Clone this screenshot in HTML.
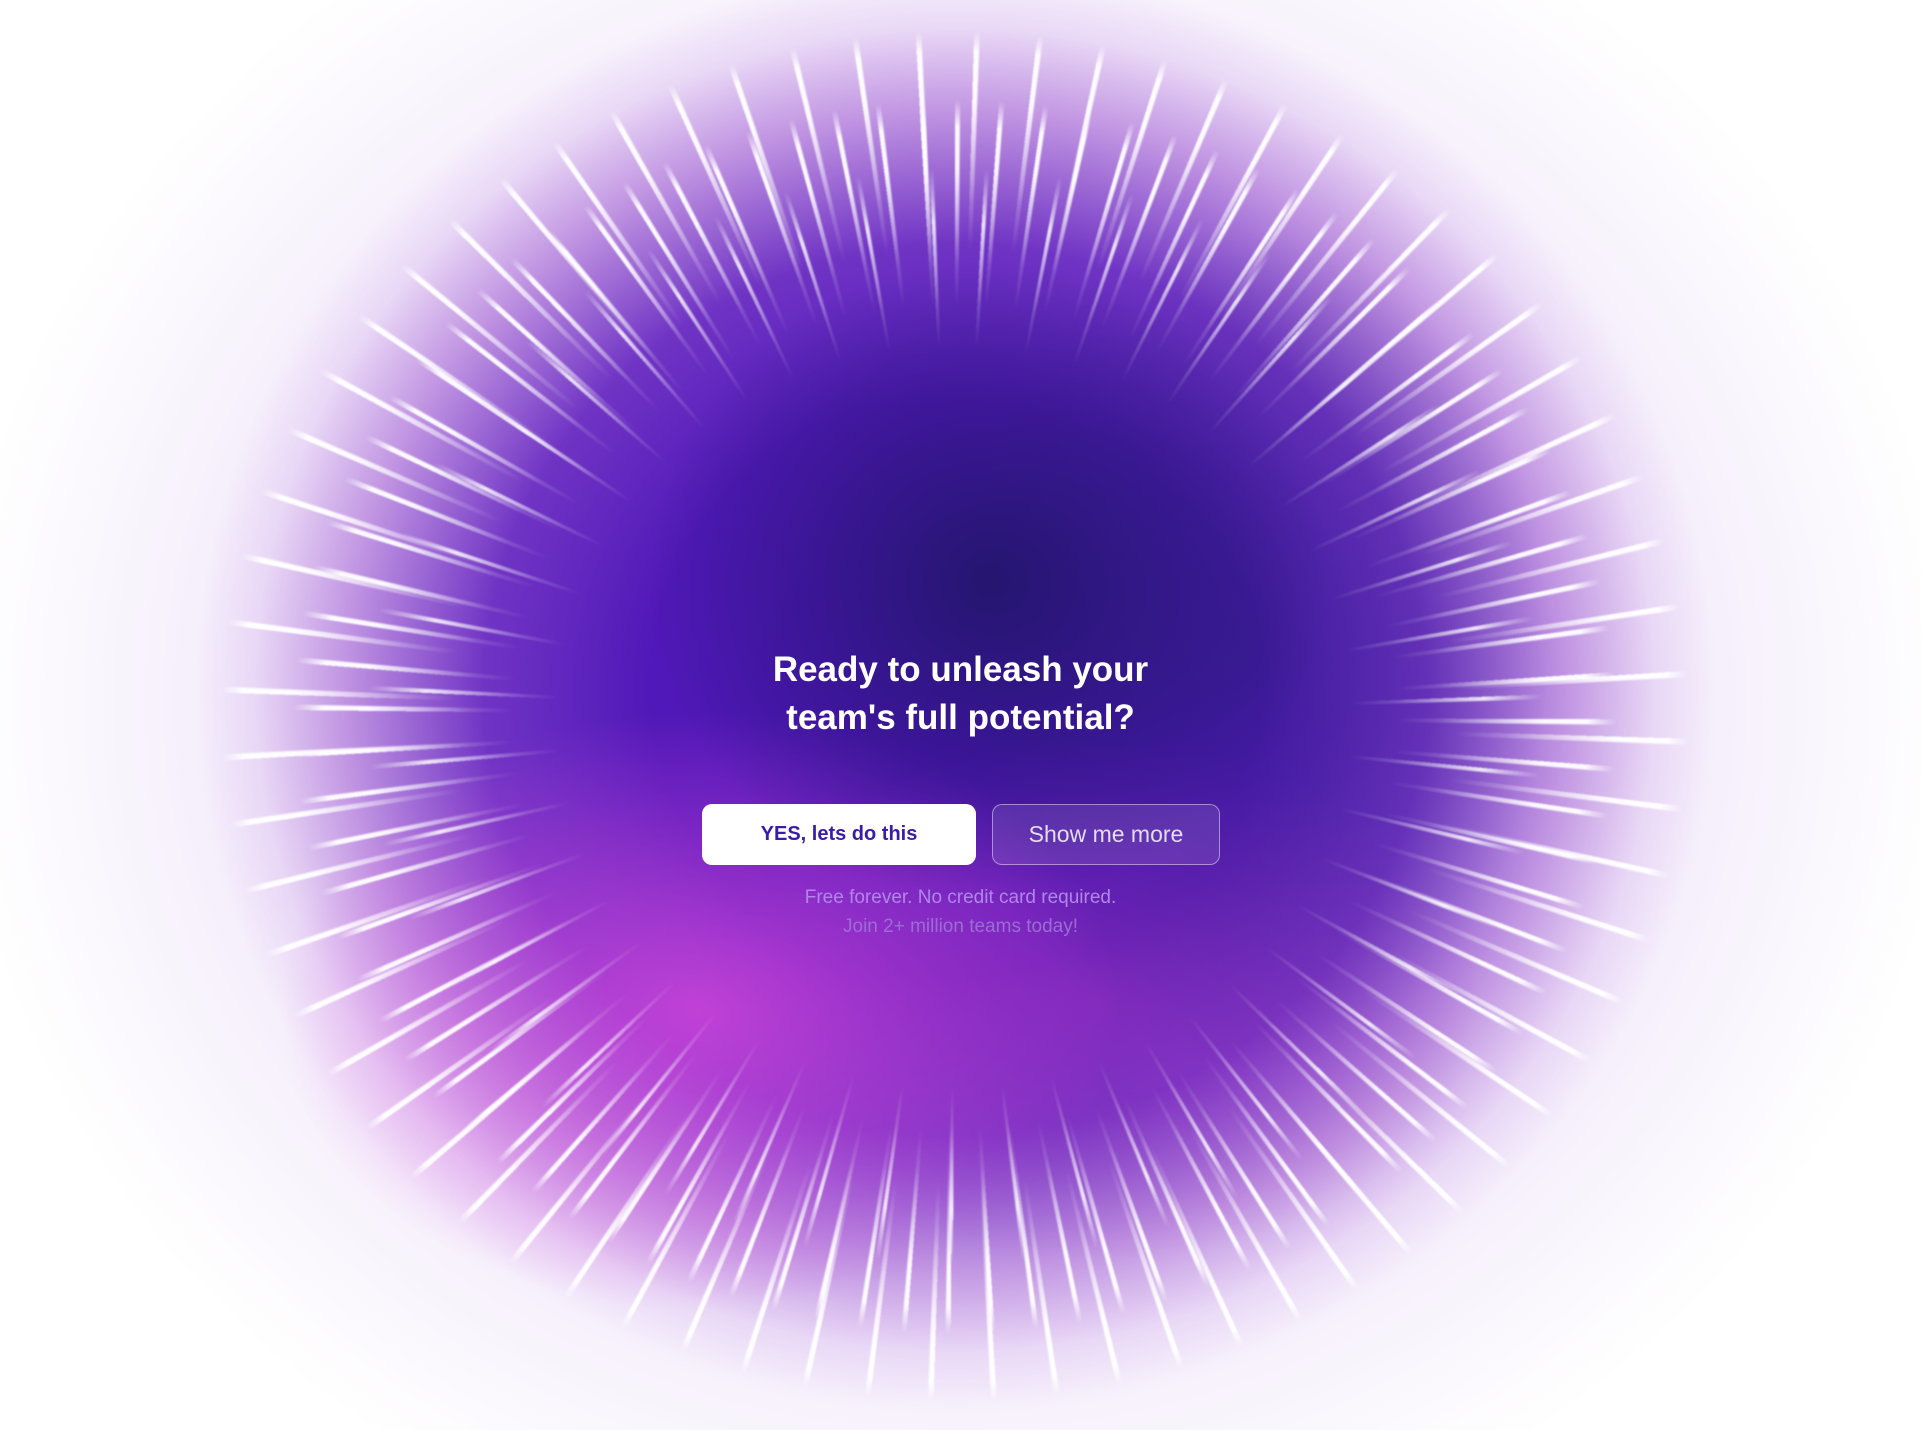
<!DOCTYPE html>
<html><head><meta charset="utf-8"><style>
html,body{margin:0;padding:0;}
body{width:1921px;height:1430px;overflow:hidden;position:relative;background:#fff;font-family:"Liberation Sans",Arial,sans-serif;}
.glow{position:absolute;inset:0;background:
 radial-gradient(ellipse 340px 320px at 990px 580px, rgba(30,22,100,.85), rgba(30,22,100,0) 100%),
 radial-gradient(ellipse 300px 420px at 1250px 650px, rgba(40,30,120,.45), rgba(40,30,120,0) 100%),
 radial-gradient(ellipse 420px 300px at 700px 1010px, rgba(215,70,220,.8), rgba(215,70,220,0) 100%),
 radial-gradient(ellipse 380px 260px at 1100px 1000px, rgba(160,50,190,.55), rgba(160,50,190,0) 100%),
 radial-gradient(ellipse 760px 720px at 955px 690px, #4a14b4 0%, #5018b8 40%, #7034c4 62%, rgba(170,110,215,.7) 80%, rgba(220,190,240,.45) 92%, rgba(255,255,255,0) 100%),
 radial-gradient(ellipse 1000px 900px at 955px 700px, rgba(200,170,235,.45) 0%, rgba(215,190,240,.3) 70%, rgba(255,255,255,0) 100%);
}
.rays{position:absolute;left:220px;top:31px;width:1470px;height:1372px;filter:blur(0.8px);}
.r1{background:repeating-conic-gradient(from 0deg at 50% 50%, rgba(255,255,255,.95) 0deg .4deg, rgba(255,255,255,0) .55deg 4.1deg);
 -webkit-mask:radial-gradient(ellipse 50% 50% at 50% 50%, transparent 60%, rgba(0,0,0,.15) 66%, #000 80%, #000 86%, transparent 90%);
 mask:radial-gradient(ellipse 50% 50% at 50% 50%, transparent 60%, rgba(0,0,0,.15) 66%, #000 80%, #000 86%, transparent 90%);}
.r2{background:repeating-conic-gradient(from 1.6deg at 50% 50%, rgba(255,255,255,.95) 0deg .4deg, rgba(255,255,255,0) .55deg 5.3deg);
 -webkit-mask:radial-gradient(ellipse 50% 50% at 50% 50%, transparent 68%, rgba(0,0,0,.2) 75%, #000 90%, #000 97%, transparent 100%);
 mask:radial-gradient(ellipse 50% 50% at 50% 50%, transparent 68%, rgba(0,0,0,.2) 75%, #000 90%, #000 97%, transparent 100%);}
.r3{background:repeating-conic-gradient(from 3.1deg at 50% 50%, rgba(255,255,255,.85) 0deg .38deg, rgba(255,255,255,0) .52deg 7.7deg);
 -webkit-mask:radial-gradient(ellipse 50% 50% at 50% 50%, transparent 54%, rgba(0,0,0,.2) 60%, #000 72%, transparent 80%);
 mask:radial-gradient(ellipse 50% 50% at 50% 50%, transparent 54%, rgba(0,0,0,.2) 60%, #000 72%, transparent 80%);}
h1{position:absolute;left:0;width:1921px;top:646px;margin:0;text-align:center;color:#fff;font-size:35px;font-weight:bold;line-height:48px;}
.btn{position:absolute;top:804px;height:61px;box-sizing:border-box;border-radius:10px;display:flex;align-items:center;justify-content:center;}
.yes{left:702px;width:274px;background:#fff;color:#3a1ca8;font-weight:bold;font-size:20px;}
.more{left:992px;width:228px;border:1.5px solid rgba(255,255,255,.45);background:rgba(255,255,255,.1);color:#e4dcf2;font-size:23px;}
.sub{position:absolute;left:0;width:1921px;text-align:center;font-size:19px;}
</style></head><body>
<div class="glow"></div>
<div class="rays r1"></div>
<div class="rays r2"></div>
<div class="rays r3"></div>
<h1>Ready to unleash your<br>team's full potential?</h1>
<div class="btn yes">YES, lets do this</div>
<div class="btn more">Show me more</div>
<div class="sub" style="top:887px;color:#b086ea;">Free forever. No credit card required.</div>
<div class="sub" style="top:916px;color:#9c6cd6;">Join 2+ million teams today!</div>
</body></html>
